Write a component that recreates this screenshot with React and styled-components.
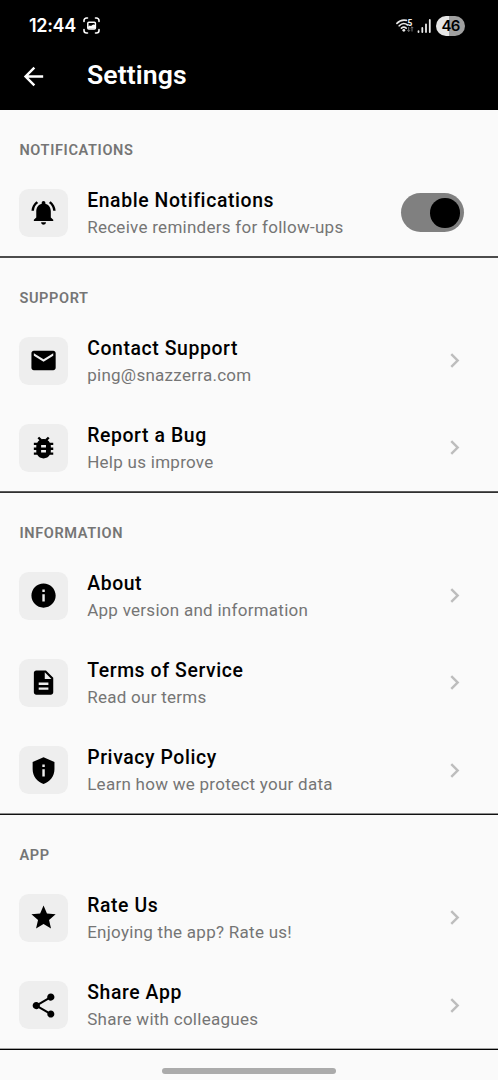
import React from 'react'
import styled, { createGlobalStyle } from 'styled-components'
import {
  MdArrowBack,
  MdBugReport,
  MdChevronRight,
  MdDescription,
  MdEmail,
  MdInfo,
  MdNotificationsActive,
  MdPrivacyTip,
  MdShare,
  MdStar,
} from 'react-icons/md'

const GlobalStyle = createGlobalStyle`
  *, *::before, *::after {
    box-sizing: border-box;
  }
  body {
    margin: 0;
    background: #fafafa;
    font-family: Roboto, 'Liberation Sans', sans-serif;
  }
`

const Screen = styled.div`
  display: flex;
  flex-direction: column;
  width: 100%;
  height: 1080px;
  overflow: hidden;
  background: #fafafa;
`

const Header = styled.header`
  height: 110px;
  flex-shrink: 0;
  background: #000;
  color: #fff;
`

const StatusBar = styled.div`
  display: flex;
  align-items: center;
  height: 51px;
  padding: 0 33px 0 29px;
`

const Clock = styled.span`
  width: 47px;
  font-family: Inter, Roboto, sans-serif;
  font-size: 18px;
  font-weight: 600;
  letter-spacing: -0.35px;
  white-space: nowrap;
`

const CaptureIcon = styled.svg`
  margin-left: 7px;
`

const StatusIcons = styled.div`
  display: flex;
  align-items: center;
  margin-left: auto;
`

const Battery = styled.span`
  width: 29px;
  height: 20px;
  margin-left: 4px;
  border-radius: 10px;
  background: linear-gradient(to right, #e6e6e6 46%, #a0a0a0 46%);
  color: #000;
  font-family: Inter, Roboto, sans-serif;
  font-size: 15px;
  font-weight: 600;
  letter-spacing: -0.9px;
  line-height: 20px;
  text-align: center;
`

const AppBar = styled.div`
  display: flex;
  align-items: center;
  height: 50px;
  padding-left: 19.4px;
`

const Title = styled.h1`
  margin: -2px 0 0 38.6px;
  font-size: 26.6px;
  font-weight: 600;
  letter-spacing: 0.1px;
  line-height: 30px;
`

const Section = styled.section`
  flex-shrink: 0;
`

const SectionTitle = styled.h2`
  height: 59.2px;
  margin: 0;
  padding: 29.9px 19.4px 0;
  color: #757575;
  font-size: 14.55px;
  font-weight: 600;
  letter-spacing: 0.63px;
  line-height: 22px;
`

const Row = styled.div`
  display: flex;
  align-items: center;
  height: 87.3px;
  padding: 0 29px 0 19.4px;
`

const IconTile = styled.div`
  display: flex;
  align-items: center;
  justify-content: center;
  width: 48.4px;
  height: 48px;
  margin-right: 19.4px;
  border-radius: 9.7px;
  background: #eee;
  color: #000;
`

const RowText = styled.div`
  flex: 1;
`

const RowTitle = styled.div`
  color: #000;
  font-size: 19.4px;
  font-weight: 500;
  letter-spacing: 0.6px;
  line-height: 29px;
`

const RowSubtitle = styled.div`
  color: #757575;
  font-size: 17px;
  letter-spacing: 0.27px;
  line-height: 24.4px;
`

const Chevron = styled(MdChevronRight)`
  color: #bdbdbd;
`

const Switch = styled.button`
  display: flex;
  align-items: center;
  justify-content: ${({ $on }) => ($on ? 'flex-end' : 'flex-start')};
  width: 63px;
  height: 39px;
  margin-right: 4.8px;
  padding: 0 4.6px;
  border: 0;
  border-radius: 20px;
  background: #808080;
`

const Knob = styled.span`
  width: 29.4px;
  height: 29.4px;
  border-radius: 50%;
  background: #000;
`

// a hairline rule, softened on its upper row
const Divider = styled.div`
  height: 2px;
  margin-top: -0.8px;
  background: ${({ $line }) => `linear-gradient(${$line[0]} 50%, ${$line[1]} 50%)`};
`

const HomeIndicator = styled.div`
  width: 174px;
  height: 5.4px;
  margin: 18.5px auto 0;
  border-radius: 3px;
  background: #ababab;
`

const sections = [
  {
    title: 'NOTIFICATIONS',
    line: ['#4c4c4c', '#4c4c4c'],
    rows: [
      { icon: MdNotificationsActive, title: 'Enable Notifications', subtitle: 'Receive reminders for follow-ups', toggle: true },
    ],
  },
  {
    title: 'SUPPORT',
    line: ['#5a5a5a', '#303030'],
    rows: [
      { icon: MdEmail, title: 'Contact Support', subtitle: 'ping@snazzerra.com' },
      { icon: MdBugReport, title: 'Report a Bug', subtitle: 'Help us improve' },
    ],
  },
  {
    title: 'INFORMATION',
    line: ['#8c8c8c', '#101010'],
    rows: [
      { icon: MdInfo, title: 'About', subtitle: 'App version and information' },
      { icon: MdDescription, title: 'Terms of Service', subtitle: 'Read our terms' },
      { icon: MdPrivacyTip, title: 'Privacy Policy', subtitle: 'Learn how we protect your data' },
    ],
  },
  {
    title: 'APP',
    line: ['#a4a4a4', '#000'],
    rows: [
      { icon: MdStar, title: 'Rate Us', subtitle: 'Enjoying the app? Rate us!' },
      { icon: MdShare, title: 'Share App', subtitle: 'Share with colleagues' },
    ],
  },
]

const Capture = () => (
  <CaptureIcon width="17" height="17" viewBox="0 0 17 17" fill="none">
    <path
      d="M1 4.5V3.5A2.5 2.5 0 0 1 3.5 1H4.5M12.5 1H13.5A2.5 2.5 0 0 1 16 3.5V4.5M16 12.5V13.5A2.5 2.5 0 0 1 13.5 16H12.5M4.5 16H3.5A2.5 2.5 0 0 1 1 13.5V12.5"
      stroke="#fff"
      strokeWidth="1.6"
      strokeLinecap="round"
    />
    <rect x="4.8" y="5.3" width="7.6" height="6.6" rx="1" stroke="#fff" strokeWidth="1.5" />
    <path d="M5 11.5V9.8L6.7 8.5L8 9L10.2 7.5L12 8V11.5Z" fill="#fff" />
  </CaptureIcon>
)

const Wifi = () => (
  <svg width="20" height="16" viewBox="0 0 20 16" fill="none">
    <g stroke="#e8e8e8" strokeWidth="1.6" strokeLinecap="round">
      <path d="M0.9 5.4C3.8 2.1 7.5 1.8 10.5 2.4" />
      <path d="M3.2 7.8C5.7 5.2 9.1 5.1 11.6 7" />
      <path d="M5.4 10.1C7 8.7 8.6 8.7 10.2 10.1" />
    </g>
    <circle cx="7.8" cy="12.3" r="1.4" fill="#e8e8e8" />
    <text x="11.6" y="7.8" fill="#f0f0f0" fontSize="8.4" fontWeight="800">5</text>
    <path d="M12.7 9V13.5M11.4 12.2L12.7 13.5L14 12.2M16 13.5V8.8M14.7 10.1L16 8.8L17.3 10.1" stroke="#777" />
  </svg>
)

const Signal = () => (
  <svg width="16" height="16" viewBox="0 0 16 16" stroke="#e8e8e8" strokeWidth="1.8" strokeLinecap="round">
    <path d="M2.5 13.2V14M6.3 10V14M10 6.3V14M13.8 2V14" />
  </svg>
)

const App = () => (
  <Screen>
    <GlobalStyle />
    <Header>
      <StatusBar>
        <Clock>12:44</Clock>
        <Capture />
        <StatusIcons>
          <Wifi />
          <Signal />
          <Battery>46</Battery>
        </StatusIcons>
      </StatusBar>
      <AppBar>
        <MdArrowBack size={29} />
        <Title>Settings</Title>
      </AppBar>
    </Header>
    {sections.map(section => (
      <Section key={section.title}>
        <SectionTitle>{section.title}</SectionTitle>
        {section.rows.map(({ icon: Icon, title, subtitle, toggle }) => (
          <Row key={title}>
            <IconTile>
              <Icon size={29.1} />
            </IconTile>
            <RowText>
              <RowTitle>{title}</RowTitle>
              <RowSubtitle>{subtitle}</RowSubtitle>
            </RowText>
            {toggle ? (
              <Switch type="button" role="switch" aria-checked="true" $on>
                <Knob />
              </Switch>
            ) : (
              <Chevron size={29.1} />
            )}
          </Row>
        ))}
        <Divider $line={section.line} />
      </Section>
    ))}
    <HomeIndicator />
  </Screen>
)

export default App
